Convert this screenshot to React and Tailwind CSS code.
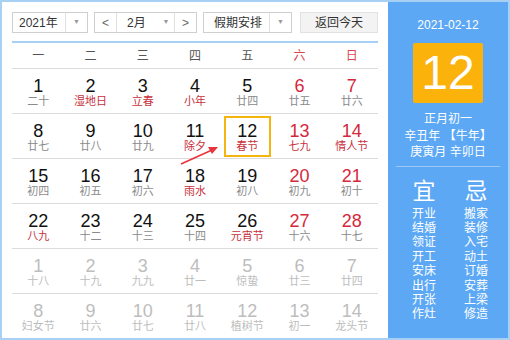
import { useState } from "react";

const rows = [
    [["1","二十"],["2","湿地日",1],["3","立春",1],["4","小年",1],["5","廿四"],["6","廿五"],["7","廿六"]],
    [["8","廿七"],["9","廿八"],["10","廿九"],["11","除夕",1],["12","春节",1],["13","七九",1],["14","情人节",1]],
    [["15","初四"],["16","初五"],["17","初六"],["18","雨水",1],["19","初八"],["20","初九"],["21","初十"]],
    [["22","八九",1],["23","十二"],["24","十三"],["25","十四"],["26","元宵节",1],["27","十六"],["28","十七"]],
    [["1","十八"],["2","十九"],["3","九九"],["4","廿一"],["5","惊蛰"],["6","廿三"],["7","廿四"]],
    [["8","妇女节"],["9","廿六"],["10","廿七"],["11","廿八"],["12","植树节"],["13","初一"],["14","龙头节"]],
];

const weekdays = ["一","二","三","四","五","六","日"];
const yi = ["开业","结婚","领证","开工","安床","出行","开张","作灶"];
const ji = ["搬家","装修","入宅","动土","订婚","安葬","上梁","修造"];

function Caret() {
    return <span className="text-[7px] text-[#999]">▼</span>;
}

export default function App() {
    const [selected] = useState("2-12");

    return (
        <div className="w-[510px] h-[340px] flex bg-white border-2 border-[#a8d0f4] font-['Liberation_Sans','Noto_Sans_CJK_SC',sans-serif] overflow-hidden">
            <div className="relative w-[386px] pl-[10px] pr-[10px] pt-[10px]">
                {/* controls */}
                <div className="flex h-[21px] gap-[6px] text-[12px] text-[#333]">
                    <div className="w-[76px] flex border border-[#cfcfcf]">
                        <span className="flex-1 flex items-center pl-[6px]">2021年</span>
                        <span className="w-[22px] flex items-center justify-center border-l border-[#e0e0e0]"><Caret /></span>
                    </div>
                    <div className="w-[103px] flex border border-[#cfcfcf]">
                        <span className="w-[22px] flex items-center justify-center border-r border-[#e0e0e0] text-[#666]">&lt;</span>
                        <span className="flex-1 flex items-center pl-[10px]">2月</span>
                        <span className="w-[16px] flex items-center justify-center"><Caret /></span>
                        <span className="w-[22px] flex items-center justify-center border-l border-[#e0e0e0] text-[#666]">&gt;</span>
                    </div>
                    <div className="w-[89px] flex border border-[#cfcfcf]">
                        <span className="flex-1 flex items-center pl-[10px]">假期安排</span>
                        <span className="w-[22px] flex items-center justify-center border-l border-[#e0e0e0]"><Caret /></span>
                    </div>
                    <div className="ml-[2px] w-[78px] flex items-center justify-center bg-[#f3f3f3] border border-[#e2e2e2]">返回今天</div>
                </div>
                <div className="mt-[8px] h-[2px] bg-[#a8d0f4]" />

                {/* weekdays */}
                <div className="grid grid-cols-7 h-[26px] items-center text-[12px] border-b border-[#dcdcdc]">
                    {weekdays.map((w, i) => (
                        <div key={w} className={"text-center " + (i > 4 ? "text-[#d9474f]" : "text-[#555]")}>{w}</div>
                    ))}
                </div>

                {/* days */}
                {rows.map((row, r) => (
                    <div key={r} className={"grid grid-cols-7 h-[45px] " + (r < 5 ? "border-b border-[#dcdcdc]" : "")}>
                        {row.map(([d, l, fest], c) => {
                            const faded = r > 3;
                            const weekend = c > 4;
                            const isSel = selected === (r === 1 ? "2-" + d : "");
                            let num = "text-[#111]";
                            if (weekend) num = "text-[#d6283c]";
                            if (faded) num = "text-[#bdbdbd]";
                            let lun = "text-[#8a8a8a]";
                            if (fest) lun = "text-[#c8303c]";
                            if (faded) lun = "text-[#bdbdbd]";
                            return (
                                <div key={c} className="flex justify-center">
                                    <div className={"mt-[2px] flex flex-col items-center w-[47px] h-[41px] pt-[4px] border-2 " + (isSel ? "border-[#f5b50f]" : "border-transparent")}>
                                        <span className={"text-[18px] leading-[18px] " + num}>{d}</span>
                                        <span className={"text-[11px] leading-[14px] -mt-px " + lun}>{l}</span>
                                    </div>
                                </div>
                            );
                        })}
                    </div>
                ))}

                {/* arrow pointing at 春节 */}
                <svg className="absolute left-[176px] top-[140px]" width="44" height="26" viewBox="0 0 44 26">
                    <line x1="3" y1="22" x2="34" y2="8" stroke="#e8343c" strokeWidth="1.6" />
                    <polygon points="40,5 30,5 34,12" fill="#e8343c" />
                </svg>
            </div>

            {/* side panel */}
            <div className="flex-1 bg-[#5ca8f4] flex flex-col items-center text-white">
                <div className="mt-[16px] text-[12px] leading-[14px]">2021-02-12</div>
                <div className="mt-[11px] w-[70px] h-[60px] bg-[#fbb20a] rounded-[2px] flex items-center justify-center text-[48px] font-light leading-none">12</div>
                <div className="mt-[8px] text-[12px] leading-[16.5px] text-center">
                    <div>正月初一</div>
                    <div>辛丑年 【牛年】</div>
                    <div>庚寅月 辛卯日</div>
                </div>
                <div className="mt-[5px] w-[104px] h-px bg-[#9cc9f6]" />
                <div className="mt-[11px] pl-[4px] flex gap-[28px]">
                    <div className="flex flex-col items-center">
                        <div className="text-[23px] leading-[26px] mb-[3px]">宜</div>
                        {yi.map((t) => <div key={t} className="text-[12px] leading-[14.4px]">{t}</div>)}
                    </div>
                    <div className="flex flex-col items-center">
                        <div className="text-[23px] leading-[26px] mb-[3px]">忌</div>
                        {ji.map((t) => <div key={t} className="text-[12px] leading-[14.4px]">{t}</div>)}
                    </div>
                </div>
            </div>
        </div>
    );
}
